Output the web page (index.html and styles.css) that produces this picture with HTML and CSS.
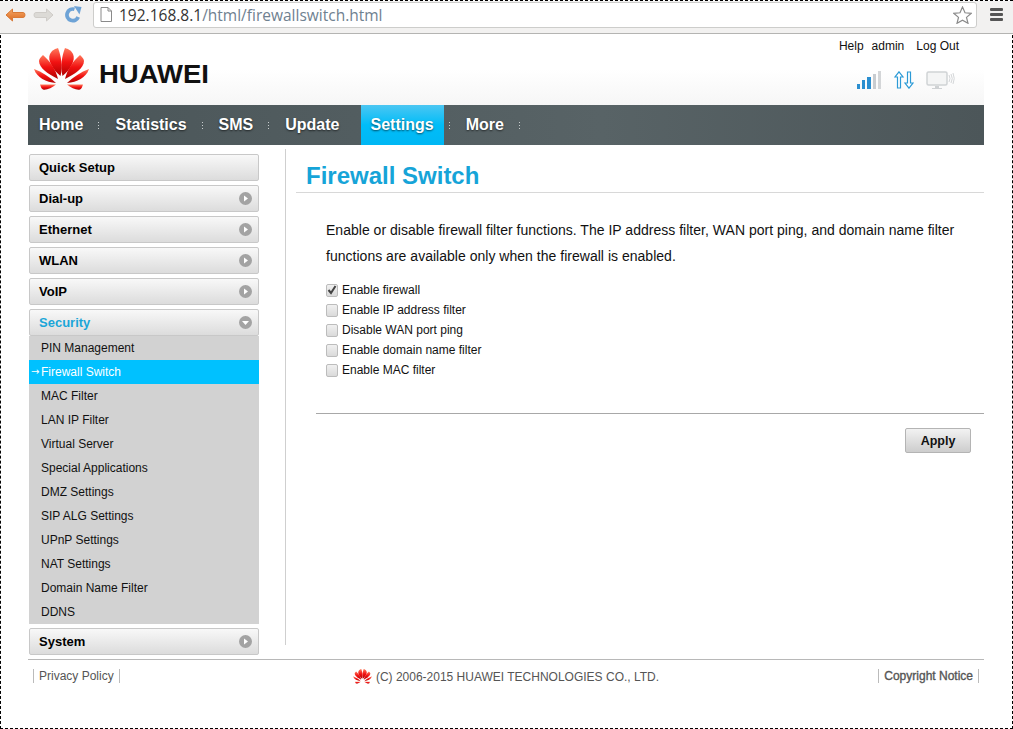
FILE: index.html
```html
<!DOCTYPE html>
<html lang="en">
<head>
<meta charset="utf-8">
<title>Firewall Switch</title>
<link rel="stylesheet" href="styles.css">
</head>
<body>
<svg class="defs" width="0" height="0" aria-hidden="true">
  <defs>
    <linearGradient id="petal" x1="0" y1="0" x2="0" y2="1">
      <stop offset="0" stop-color="#ff7a5c"/>
      <stop offset="0.5" stop-color="#f21212"/>
      <stop offset="1" stop-color="#b00000"/>
    </linearGradient>
    <linearGradient id="orange" x1="0" y1="0" x2="0" y2="1">
      <stop offset="0" stop-color="#f4a868"/>
      <stop offset="1" stop-color="#dd6a20"/>
    </linearGradient>
    <g id="half" fill="url(#petal)">
      <path d="M26.500 28 C19 22 13 12 16 6 C18 2 21 1 24 0 C27 8 29 18 26.500 28Z"/>
      <path d="M24 31 C14 26 5 20 5 13 C5 11 7 9 9 7 C16 13 22 22 24 31Z"/>
      <path d="M22 35 C12 34 3 30 0 21 C8 24 16 29 22 35Z"/>
      <path d="M22 36.500 C18 40 12 42.500 9 41.500 C7.500 41 6.500 38 6 36.500Z"/>
    </g>
    <g id="hw">
      <use href="#half"/>
      <use href="#half" transform="matrix(-1 0 0 1 55 0)"/>
    </g>
    <g id="chev">
      <circle cx="6.500" cy="6.500" r="6.500" fill="#a3a3a3"/>
      <path d="M5 3.500 L9 6.500 L5 9.500Z" fill="#fff"/>
    </g>
  </defs>
</svg>

<div class="frame">
  <div class="toolbar">
    <svg class="tool-ic" width="22" height="18" viewBox="0 0 22 18"><path d="M8.500 3 L2 9 L8.500 15 V11.500 H19 Q21 11.500 21 9 Q21 6.500 19 6.500 H8.500Z" fill="url(#orange)" stroke="#d87a38" stroke-linejoin="round"/></svg>
    <svg class="tool-ic" width="22" height="18" viewBox="0 0 22 18"><path d="M13.500 3 L20 9 L13.500 15 V11.500 H3 Q1 11.500 1 9 Q1 6.500 3 6.500 H13.500Z" fill="#dcdad6" stroke="#cfccc8" stroke-linejoin="round"/></svg>
    <svg class="tool-ic reload" width="17" height="17" viewBox="0 0 17 17"><path d="M13.200 11 A5.800 5.800 0 1 1 9.500 3.300" fill="none" stroke="#6ea3d6" stroke-width="3.800"/><path d="M9 0 L16.500 1 L14.500 8.500Z" fill="#6ea3d6"/></svg>
    <div class="urlbar">
      <svg class="page-ic" width="12" height="15" viewBox="0 0 12 15"><path d="M1 .5 H8 L11.500 4 V14.500 H1Z M8 .5 V4 H11.500" fill="#fff" stroke="#8a8a8a"/></svg>
      <span class="url"><span class="url-host">192.168.8.1</span>/html/firewallswitch.html</span>
      <svg class="star" width="19" height="18" viewBox="0 0 19 18"><path d="M9.500 1 L12 6.800 L18.300 7.300 L13.500 11.400 L15 17.300 L9.500 14.200 L4 17.300 L5.500 11.400 L.7 7.300 L7 6.800Z" fill="#fff" stroke="#8a8a8a" stroke-width="1.200"/></svg>
    </div>
    <div class="menu-ic"><i></i><i></i><i></i></div>
  </div>

  <div class="page">
    <div class="toplinks"><span>Help</span><span class="user">admin</span><span>Log Out</span></div>
    <header class="header">
      <div class="logo">
        <svg width="55" height="43" viewBox="0 0 55 43"><use href="#hw"/></svg>
        <span class="logo-text">HUAWEI</span>
      </div>
      <div class="status">
        <svg width="25" height="18" viewBox="0 0 25 18">
          <rect x="0" y="13" width="3" height="5" fill="#2b8fd0"/>
          <rect x="5" y="9" width="3" height="9" fill="#2b8fd0"/>
          <rect x="10" y="6" width="4" height="12" fill="#2b8fd0"/>
          <rect x="16" y="3" width="3" height="15" fill="#c8ccd0"/>
          <rect x="21" y="0" width="3" height="18" fill="#d4d6d8"/>
        </svg>
        <svg width="20" height="18" viewBox="0 0 20 18" fill="#fff" stroke="#2b9ad6" stroke-width="1.200">
          <path d="M5 .8 L9 6 H6.500 V17 H3.500 V6 H1Z"/>
          <path d="M15 17.200 L19 12 H16.500 V1 H13.500 V12 H11Z"/>
        </svg>
        <svg width="29" height="19" viewBox="0 0 29 19">
          <rect x="1" y="1" width="20" height="13" rx="1.500" fill="#f4f5f5" stroke="#d0d3d5" stroke-width="1.500"/>
          <path d="M9 15 H13 V17 H16 V18 H6 V17 H9Z" fill="#cfd2d4"/>
          <path d="M23 4 Q25 7.500 23 11 M25 3 Q27.500 7.500 25 12 M27 2 Q29.500 7.500 27 13" fill="none" stroke="#d4d6d8"/>
        </svg>
      </div>
    </header>

    <nav class="nav">
      <a class="nav-item">Home</a><i class="dots"></i>
      <a class="nav-item">Statistics</a><i class="dots"></i>
      <a class="nav-item">SMS</a><i class="dots"></i>
      <a class="nav-item">Update</a>
      <a class="nav-item active">Settings</a><i class="dots after-active"></i>
      <a class="nav-item">More</a><i class="dots"></i>
    </nav>

    <div class="main">
      <aside class="side">
        <div class="side-btn"><span>Quick Setup</span></div>
        <div class="side-btn"><span>Dial-up</span><svg width="13" height="13"><use href="#chev"/></svg></div>
        <div class="side-btn"><span>Ethernet</span><svg width="13" height="13"><use href="#chev"/></svg></div>
        <div class="side-btn"><span>WLAN</span><svg width="13" height="13"><use href="#chev"/></svg></div>
        <div class="side-btn"><span>VoIP</span><svg width="13" height="13"><use href="#chev"/></svg></div>
        <div class="side-group">
          <div class="side-btn open"><span>Security</span><svg width="13" height="13"><circle cx="6.500" cy="6.500" r="6.500" fill="#a3a3a3"/><path d="M3 5 H10 L6.500 9Z" fill="#fff"/></svg></div>
          <ul class="submenu">
            <li>PIN Management</li>
            <li class="current"><span class="arrow">→</span>Firewall Switch</li>
            <li>MAC Filter</li>
            <li>LAN IP Filter</li>
            <li>Virtual Server</li>
            <li>Special Applications</li>
            <li>DMZ Settings</li>
            <li>SIP ALG Settings</li>
            <li>UPnP Settings</li>
            <li>NAT Settings</li>
            <li>Domain Name Filter</li>
            <li>DDNS</li>
          </ul>
        </div>
        <div class="side-btn"><span>System</span><svg width="13" height="13"><use href="#chev"/></svg></div>
      </aside>

      <section class="content">
        <h1 class="title">Firewall Switch</h1>
        <div class="body">
          <p class="desc">Enable or disable firewall filter functions. The IP address filter, WAN port ping, and domain name filter functions are available only when the firewall is enabled.</p>
          <div class="checks">
            <label class="check"><span class="box on"><svg width="10" height="10" viewBox="0 0 10 10"><path d="M1.500 5 L4 8 L8.500 1" fill="none" stroke="#444" stroke-width="2"/></svg></span>Enable firewall</label>
            <label class="check"><span class="box"></span>Enable IP address filter</label>
            <label class="check"><span class="box"></span>Disable WAN port ping</label>
            <label class="check"><span class="box"></span>Enable domain name filter</label>
            <label class="check"><span class="box"></span>Enable MAC filter</label>
          </div>
          <div class="actions"><button class="apply" type="button">Apply</button></div>
        </div>
      </section>
    </div>

    <footer class="footer">
      <span class="foot-link">Privacy Policy</span>
      <span class="copy"><svg width="19" height="15" viewBox="0 0 55 43"><use href="#hw"/></svg>(C) 2006-2015 HUAWEI TECHNOLOGIES CO., LTD.</span>
      <span class="foot-link strong">Copyright Notice</span>
    </footer>
  </div>
</div>
</body>
</html>
```

FILE: styles.css
```css
* { box-sizing: border-box; }
html, body { margin: 0; padding: 0; height: 100%; }
body { background: #fff; font-family: "Liberation Sans", Arial, sans-serif; color: #000; overflow: hidden; }
.defs { position: absolute; }
.frame { width: 1013px; height: 729px; border: 1px dashed #000; position: relative; }

.toolbar { height: 33px; background: #f2f1f0; border-bottom: 1px solid #b4b4b2; display: flex; align-items: center; padding: 0 0 5px 4px; margin-left: -1px; margin-right: -1px; }
.tool-ic { flex: none; margin-right: 7px; }
.reload { margin-left: 3px; margin-right: 11px; }
.urlbar { width: 884px; height: 26px; background: #fff; border: 1px solid #cdcdcb; border-radius: 3px; display: flex; align-items: center; padding: 0 4px 0 6px; }
.page-ic { flex: none; margin-right: 7px; }
.url { flex: 1; font-family: "Open Sans", "DejaVu Sans", sans-serif; font-size: 15.500px; color: #6f8190; white-space: nowrap; }
.url-host { color: #333; }
.star { flex: none; }
.menu-ic { margin-left: 13px; display: flex; flex-direction: column; gap: 2px; width: 13px; }
.menu-ic i { display: block; height: 3px; background: #555; border-radius: 1px; }

.page { width: 956px; margin-left: 27px; position: relative; }
.toplinks { position: absolute; right: 25px; top: 5px; z-index: 1; font-size: 12px; color: #111; display: flex; gap: 12px; line-height: 14px; }
.toplinks .user { margin-left: -4px; }
.header { height: 71px; background: linear-gradient(#fff 50%, #f6f6f6); display: flex; justify-content: space-between; padding: 14px 29px 0 6px; }
.logo { display: flex; align-items: flex-start; height: 43px; }
.logo-text { font-size: 25px; line-height: 26px; font-weight: 700; margin: 13px 0 0 10px; color: #111; transform: scaleX(1.100); transform-origin: left; }
.status { display: flex; align-items: flex-start; gap: 12px; padding-top: 23px; }

.nav { height: 40px; display: flex; align-items: stretch; background: linear-gradient(90deg, #4a5558, #586366 60%, #4c5659); }
.nav-item { font-size: 16px; font-weight: 700; color: #fff; line-height: 39px; text-shadow: 0 1px 2px rgba(0,0,0,.6); }
.nav-item:first-child { margin-left: 11px; }
.nav-item.active { background: linear-gradient(#4cc6f2, #00bdf8 50%, #00b7f4); padding: 0 10px; margin-left: 21px; }
.dots { align-self: center; width: 1px; height: 7px; margin: 1px 16px 0 15px; background: repeating-linear-gradient(#c8cdce 0 1px, transparent 1px 3px); }
.dots.after-active { margin-left: 5px; }

.main { display: flex; }
.side { width: 230px; margin-left: 1px; padding-top: 9px; display: flex; flex-direction: column; gap: 4px; }
.side-btn { height: 27px; border: 1px solid #c8c8c8; border-radius: 2px; background: linear-gradient(#f8f8f8, #dcdcdc); display: flex; justify-content: space-between; align-items: center; padding: 0 6px 0 9px; font-size: 13px; font-weight: 700; color: #000; }
.side-btn.open { color: #1ba6d8; }
.submenu { list-style: none; margin: 0; padding: 0; background: #d2d2d2; }
.submenu li { height: 24px; line-height: 24px; font-size: 12px; color: #111; padding-left: 12px; position: relative; }
.submenu .current { background: #00c1ff; color: #fff; }
.arrow { position: absolute; left: 2px; top: 0; font-family: "DejaVu Sans", sans-serif; font-size: 10px; }

.content { width: 699px; height: 496px; margin: 4px 0 0 26px; border-left: 1px solid #cfcfcf; padding-left: 10px; }
.title { margin: 0; height: 44px; padding: 12px 0 0 10px; font-size: 24px; line-height: 30px; font-weight: 700; color: #16a4d8; border-bottom: 1px solid #d8d8d8; }
.body { padding: 24px 0 0 20px; }
.desc { margin: 0 20px 0 10px; font-size: 14px; line-height: 26px; color: #111; letter-spacing: .02px; }
.checks { margin: 11px 0 0 10px; display: flex; flex-direction: column; }
.check { height: 20px; display: flex; align-items: center; font-size: 12px; color: #111; }
.box { width: 12px; height: 13px; margin-right: 4px; border: 1px solid #bcbcbc; border-radius: 2px; background: linear-gradient(#f0f0f0, #dadada); display: flex; align-items: center; justify-content: center; }
.actions { margin-top: 33px; border-top: 1px solid #a8a8a8; padding: 14px 13px 0 0; display: flex; justify-content: flex-end; }
.apply { width: 66px; height: 25px; border: 1px solid #b4b4b4; border-radius: 2px; background: linear-gradient(#f2f2f2, #cdcdcd); font: 700 12.500px "Liberation Sans", Arial, sans-serif; color: #111; padding: 0; }

.footer { margin-top: 4px; border-top: 1px solid #b8b8b8; height: 40px; display: flex; justify-content: space-between; align-items: flex-start; padding: 9px 5px 0 5px; font-size: 12px; color: #555; }
.foot-link { border-left: 1px solid #bbb; border-right: 1px solid #bbb; padding: 0 5px; line-height: 14px; }
.foot-link.strong { -webkit-text-stroke: .35px #555; }
.copy { display: flex; align-items: center; gap: 4px; line-height: 14px; margin-left: 14px; }
```
